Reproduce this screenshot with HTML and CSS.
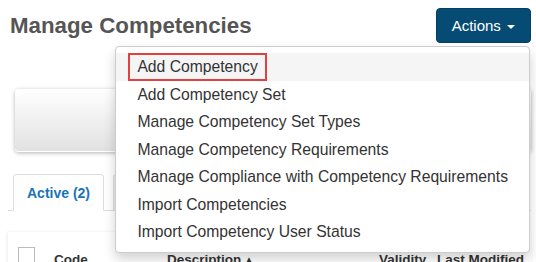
FILE: index.html
```html
<!DOCTYPE html>
<html lang="en">
<head>
  <meta charset="UTF-8">
  <title>Manage Competencies</title>
  <link rel="stylesheet" href="styles.css">
</head>
<body>
  <div class="page">
    <div class="page-header">
      <h1>Manage Competencies</h1>
      <div class="dropdown">
        <button class="btn-actions">Actions <span class="caret"></span></button>
        <ul class="dropdown-menu">
          <li class="active"><span class="callout">Add Competency</span></li>
          <li>Add Competency Set</li>
          <li>Manage Competency Set Types</li>
          <li>Manage Competency Requirements</li>
          <li>Manage Compliance with Competency Requirements</li>
          <li>Import Competencies</li>
          <li>Import Competency User Status</li>
        </ul>
      </div>
    </div>

    <div class="well"></div>

    <ul class="tabs">
      <li class="tab current">Active (2)</li>
      <li class="tab">Inactive (0)</li>
    </ul>

    <div class="grid-panel">
      <div class="grid-head">
        <span><span class="check"></span></span>
        <span>Code</span>
        <span>Description <span class="sort">&#9650;</span></span>
        <span>Validity</span>
        <span>Last Modified</span>
      </div>
    </div>
  </div>
</body>
</html>
```

FILE: styles.css
```css
/* base */
body {
  margin: 0;
  background: #ffffff;
  color: #333333;
  font-family: 'Liberation Sans', Arial, sans-serif;
  font-size: 14px;
}
.page {
  padding: 8px 5px 0 8px;
}
.page-header {
  display: flex;
  justify-content: space-between;
  align-items: flex-start;
}
h1 {
  margin: 0 0 0 2px;
  font-size: 22.3px;
  line-height: 35px;
  color: #555555;
}

/* actions dropdown */
.dropdown {
  position: relative;
}
.btn-actions {
  display: block;
  height: 35px;
  padding: 0 15px;
  background-color: #064b74;
  color: #ffffff;
  border: 1px solid #053e60;
  border-radius: 4px;
  font-family: inherit;
  font-size: 15px;
  cursor: pointer;
}
.caret {
  display: inline-block;
  width: 0;
  height: 0;
  margin-left: 2px;
  vertical-align: middle;
  border-top: 4px solid #ffffff;
  border-left: 4px solid transparent;
  border-right: 4px solid transparent;
}
.dropdown-menu {
  position: absolute;
  top: 38px;
  right: 1px;
  z-index: 10;
  margin: 0;
  padding: 6px 0;
  list-style: none;
  background: #ffffff;
  border: 1px solid #cccccc;
  border-radius: 4px;
  box-shadow: 0 6px 12px rgba(0, 0, 0, 0.18);
  white-space: nowrap;
}
.dropdown-menu li {
  padding: 3px 21px;
  font-size: 15.7px;
  line-height: 21.5px;
  color: #333333;
}
.dropdown-menu li.active {
  background-color: #f5f5f5;
}
.callout {
  display: inline-block;
  margin: -3px 0 -3px -9px;
  padding: 1px 7px;
  border: 2px solid #e2423f;
}

/* well */
.well {
  height: 62px;
  margin: 46px 0 0 7px;
  border-radius: 4px;
  background: linear-gradient(#ffffff, #e1e1e1);
  border-bottom: 1px solid #ffffff;
  box-shadow: 0 1px 4px rgba(0, 0, 0, 0.3);
}

/* tabs */
.tabs {
  display: flex;
  gap: 9px;
  margin: 22px 0 0 0;
  padding: 0 0 0 5px;
  list-style: none;
  border-bottom: 1px solid #dddddd;
}
.tab {
  margin-bottom: -1px;
  padding: 0 13px;
  height: 35px;
  line-height: 37px;
  font-weight: bold;
  color: #1a73b6;
  border: 1px solid #dddddd;
  border-bottom: none;
  border-radius: 4px 4px 0 0;
  background: #eeeeee;
}
.tab.current {
  background: #ffffff;
  border-bottom: 1px solid #ffffff;
}

/* grid */
.grid-panel {
  margin-top: 21px;
  padding: 18px 0 0 10px;
  box-shadow: -1px 0 3px rgba(0, 0, 0, 0.08);
}
.grid-head {
  display: grid;
  grid-template-columns: 36px 113px 212px 58px auto;
  font-size: 13.5px;
  line-height: 20px;
  font-weight: bold;
  color: #333333;
}
.check {
  display: inline-block;
  width: 15px;
  height: 15px;
  margin-top: -3px;
  border: 1px solid #bbbbbb;
  vertical-align: top;
}
.sort {
  font-size: 8px;
  vertical-align: middle;
}
```
